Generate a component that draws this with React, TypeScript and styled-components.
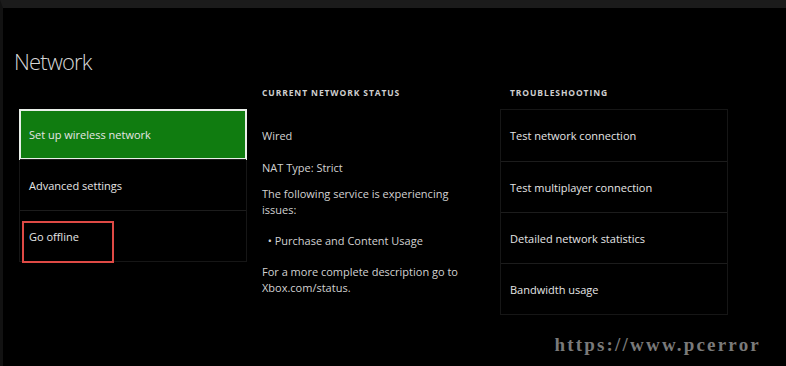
import styled, { createGlobalStyle } from 'styled-components';

const GlobalStyle = createGlobalStyle`
	html, body {
		margin: 0;
		padding: 0;
		background: #000;
	}
	* {
		box-sizing: border-box;
	}
`;

const StyledPage = styled.div`
	position: relative;
	width: 786px;
	height: 366px;
	background: #000;
	border-top: 8px solid #1b1b1b;
	border-left: 3px solid #121212;
	font-family: 'Open Sans', 'Noto Sans', sans-serif;
	color: #e4e4e4;
	overflow: hidden;
`;

const StyledTitle = styled.h1`
	margin: 0;
	padding: 38px 0 0 11px;
	font-size: 22px;
	font-weight: 300;
	letter-spacing: -0.8px;
	line-height: 30px;
	color: #d6d6d6;
`;

const StyledGrid = styled.div`
	display: grid;
	grid-template-columns: 228px 223px 228px;
	grid-template-rows: 25px auto;
	column-gap: 15px;
	align-items: start;
	margin: 8px 0 0 16px;
`;

const StyledHeader = styled.div<{ $indent?: number }>`
	margin-top: 3px;
	padding-left: ${({ $indent }) => $indent || 0}px;
	font-size: 8.5px;
	font-weight: 700;
	letter-spacing: 0.9px;
	line-height: 12px;
	text-transform: uppercase;
	color: #cfcfcf;
`;

const StyledList = styled.div`
	display: flex;
	flex-direction: column;
	border: 1px solid #161616;
`;

const StyledItem = styled.div<{ $active?: boolean }>`
	position: relative;
	display: flex;
	align-items: center;
	height: 51px;
	padding-left: ${({ $active }) => ($active ? '8px' : '9px')};
	font-size: 11px;
	color: #e6e6e6;
	background: ${({ $active }) => ($active ? '#107c10' : 'transparent')};
	border: ${({ $active }) => ($active ? '2px solid #e9efe9' : 'none')};
	border-top: ${({ $active }) => ($active ? '2px solid #e9efe9' : '1px solid #1c1c1c')};
	margin: ${({ $active }) => ($active ? '-1px' : '0')};

	&:first-child {
		border-top: ${({ $active }) => ($active ? '2px solid #e9efe9' : 'none')};
	}
`;

const StyledMarker = styled.div`
	position: absolute;
	left: 2px;
	top: 10px;
	width: 92px;
	height: 42px;
	border: 2px solid #df4a45;
`;

const StyledStatus = styled.div`
	display: flex;
	flex-direction: column;
	padding-top: 19px;
	font-size: 11px;
	line-height: 16px;
	color: #d2d2d2;
`;

const StyledLine = styled.p<{ $gap?: number }>`
	margin: ${({ $gap }) => $gap || 0}px 0 0 0;
`;

const StyledWatermark = styled.div`
	position: absolute;
	right: 25px;
	bottom: 10px;
	font-family: 'Liberation Serif', serif;
	font-weight: 700;
	font-size: 19px;
	letter-spacing: 2.2px;
	color: #7a7a7a;
`;

const App = () => {
	return (
		<StyledPage>
			<GlobalStyle />
			<StyledTitle>Network</StyledTitle>
			<StyledGrid>
				<div />
				<StyledHeader>Current network status</StyledHeader>
				<StyledHeader $indent={10}>Troubleshooting</StyledHeader>

				<StyledList>
					<StyledItem $active>Set up wireless network</StyledItem>
					<StyledItem>Advanced settings</StyledItem>
					<StyledItem>
						Go offline
						<StyledMarker />
					</StyledItem>
				</StyledList>

				<StyledStatus>
					<StyledLine>Wired</StyledLine>
					<StyledLine $gap={16}>NAT Type: Strict</StyledLine>
					<StyledLine $gap={10}>
						The following service is experiencing
						<br />
						issues:
					</StyledLine>
					<StyledLine $gap={15}>&nbsp;&nbsp;• Purchase and Content Usage</StyledLine>
					<StyledLine $gap={15}>
						For a more complete description go to
						<br />
						Xbox.com/status.
					</StyledLine>
				</StyledStatus>

				<StyledList>
					<StyledItem>Test network connection</StyledItem>
					<StyledItem>Test multiplayer connection</StyledItem>
					<StyledItem>Detailed network statistics</StyledItem>
					<StyledItem>Bandwidth usage</StyledItem>
				</StyledList>
			</StyledGrid>
			<StyledWatermark>https://www.pcerror</StyledWatermark>
		</StyledPage>
	);
};

export default App;
